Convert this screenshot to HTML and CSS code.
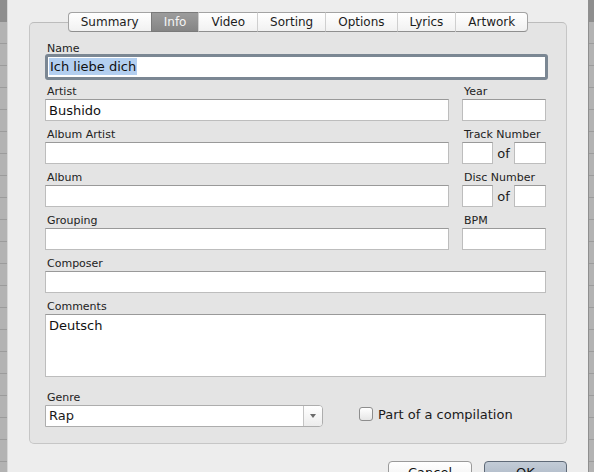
FILE: index.html
```html
<!DOCTYPE html>
<html lang="en">
<head>
    <meta charset="UTF-8">
    <title>Song Info</title>
    <link rel="stylesheet" href="styles.css">
</head>
<body>
    <div class="screen">
        <div class="strip"></div>

        <div class="dialog">
            <!-- Tab bar -->
            <div class="tabs">
                <div class="tab">Summary</div>
                <div class="tab active">Info</div>
                <div class="tab">Video</div>
                <div class="tab">Sorting</div>
                <div class="tab">Options</div>
                <div class="tab">Lyrics</div>
                <div class="tab">Artwork</div>
            </div>

            <div class="panel">
                <div class="form-grid">
                    <div class="form-group wide">
                        <label>Name</label>
                        <div class="field focused"><span class="sel">Ich liebe dich</span></div>
                    </div>

                    <div class="form-group">
                        <label>Artist</label>
                        <input type="text" value="Bushido">
                    </div>
                    <div class="form-group">
                        <label>Year</label>
                        <input type="text">
                    </div>

                    <div class="form-group">
                        <label>Album Artist</label>
                        <input type="text">
                    </div>
                    <div class="form-group">
                        <label>Track Number</label>
                        <div class="pair">
                            <input type="text" class="small">
                            <span class="of">of</span>
                            <input type="text" class="small">
                        </div>
                    </div>

                    <div class="form-group">
                        <label>Album</label>
                        <input type="text">
                    </div>
                    <div class="form-group">
                        <label>Disc Number</label>
                        <div class="pair">
                            <input type="text" class="small">
                            <span class="of">of</span>
                            <input type="text" class="small">
                        </div>
                    </div>

                    <div class="form-group">
                        <label>Grouping</label>
                        <input type="text">
                    </div>
                    <div class="form-group">
                        <label>BPM</label>
                        <input type="text">
                    </div>

                    <div class="form-group wide">
                        <label>Composer</label>
                        <input type="text">
                    </div>

                    <div class="form-group wide">
                        <label>Comments</label>
                        <textarea>Deutsch</textarea>
                    </div>
                </div>

                <!-- Genre + compilation -->
                <div class="genre-row">
                    <div class="form-group">
                        <label>Genre</label>
                        <div class="select">
                            <span class="select-value">Rap</span>
                            <span class="select-arrow"><span class="caret"></span></span>
                        </div>
                    </div>
                    <div class="compilation">
                        <span class="checkbox"></span>
                        <span>Part of a compilation</span>
                    </div>
                </div>
            </div>

            <div class="buttons">
                <button class="btn">Cancel</button>
                <button class="btn btn-default">OK</button>
            </div>
        </div>

        <div class="strip strip-right"></div>
    </div>
</body>
</html>
```

FILE: styles.css
```css
body {
    margin: 0;
    font-family: "DejaVu Sans", Verdana, sans-serif;
    color: #1a1a1a;
    overflow: hidden;
}
.screen {
    display: flex;
    height: 472px;
}
.strip {
    width: 8px;
    background:
        linear-gradient(#8e8e8e 0, #8e8e8e 22px, transparent 22px),
        repeating-linear-gradient(#b3b3b3 0, #b3b3b3 21px, #9c9c9c 21px, #9c9c9c 22px);
    border-right: 1px solid #d6d6d6;
    box-sizing: border-box;
}
.strip-right {
    width: 6px;
    border-right: none;
    border-left: 1px solid #8f8f8f;
}
.dialog {
    flex: 1;
    background-color: #ededed;
    padding: 12px 21px 0 21px;
}

/* tabs */
.tabs {
    display: flex;
    justify-content: center;
    height: 20px;
    position: relative;
    z-index: 1;
}
.tab {
    font-size: 12px;
    line-height: 18px;
    padding: 0 12px;
    background: linear-gradient(#ffffff, #f1f1f1);
    border-top: 1px solid #a3a3a3;
    border-bottom: 1px solid #8f8f8f;
    border-left: 1px solid #cfcfcf;
    color: #1c1c1c;
}
.tab:first-child {
    border-left: 1px solid #a3a3a3;
    border-radius: 4px 0 0 4px;
}
.tab:last-child {
    border-right: 1px solid #a3a3a3;
    border-radius: 0 4px 4px 0;
}
.tab.active {
    background: linear-gradient(#9c9c9c, #858585);
    border-color: #7a7a7a;
    color: #f5f5f5;
}

/* panel */
.panel {
    margin-top: -10px;
    background-color: #e4e4e4;
    border: 1px solid #c6c6c6;
    border-top-color: #bcbcbc;
    border-radius: 5px;
    padding: 19px 20px 16px 15px;
}
.form-grid {
    display: grid;
    grid-template-columns: 404px 84px;
    column-gap: 13px;
    row-gap: 7px;
}
.form-group.wide {
    grid-column: 1 / 3;
}
label {
    display: block;
    font-size: 11px;
    line-height: 13px;
    margin-bottom: 1px;
    padding-left: 2px;
    color: #222;
}
input[type="text"], textarea, .field {
    display: block;
    width: 100%;
    height: 22px;
    box-sizing: border-box;
    margin: 0;
    padding: 0 3px;
    border: 1px solid #bdbdbd;
    border-top-color: #999;
    background-color: white;
    font-family: inherit;
    font-size: 13px;
    color: #111;
    outline: none;
}
.field.focused {
    width: calc(100% + 2px);
    height: 26px;
    margin: -2px 0;
    padding: 1px 1px;
    border: 3px solid #7b8793;
    border-radius: 3px;
    line-height: 17px;
}
.sel {
    display: inline-block;
    background-color: #b3cff0;
    padding: 0 1px;
}
.pair {
    display: flex;
    justify-content: space-between;
    align-items: center;
}
input.small {
    width: 31px;
}
input.small:last-child {
    width: 32px;
}
.of {
    font-size: 13px;
}
textarea {
    height: 63px;
    padding: 3px 3px;
    line-height: 16px;
    resize: none;
}

/* genre */
.genre-row {
    display: flex;
    align-items: flex-end;
    margin-top: 14px;
}
.select {
    display: flex;
    width: 278px;
    height: 22px;
    box-sizing: border-box;
    border: 1px solid #adadad;
    border-radius: 0 4px 4px 0;
    background-color: white;
    font-size: 13px;
}
.select-value {
    flex: 1;
    padding-left: 3px;
    line-height: 20px;
}
.select-arrow {
    width: 18px;
    border-left: 1px solid #c4c4c4;
    background: linear-gradient(#ffffff, #ececec);
    border-radius: 0 3px 3px 0;
    display: flex;
    align-items: center;
    justify-content: center;
}
.caret {
    width: 0;
    height: 0;
    border-left: 3px solid transparent;
    border-right: 3px solid transparent;
    border-top: 4px solid #6a6a6a;
}
.compilation {
    display: flex;
    align-items: center;
    height: 22px;
    margin-left: 36px;
    margin-bottom: 2px;
    font-size: 13px;
}
.checkbox {
    width: 14px;
    height: 14px;
    box-sizing: border-box;
    border: 1px solid #8d8d8d;
    border-radius: 3px;
    background: linear-gradient(#ffffff, #e6e6e6);
    margin-right: 5px;
}

/* buttons */
.buttons {
    display: flex;
    justify-content: flex-end;
    gap: 12px;
    margin-top: 17px;
}
.btn {
    width: 84px;
    height: 22px;
    font-family: inherit;
    font-size: 13px;
    border: 1px solid #9a9a9a;
    border-radius: 4px;
    background: linear-gradient(#ffffff, #f0f0f0);
    color: #111;
    padding: 0;
}
.btn-default {
    width: 83px;
    border-color: #5f6a78;
    background: linear-gradient(#c3ccd7, #a9b5c4);
}
```
